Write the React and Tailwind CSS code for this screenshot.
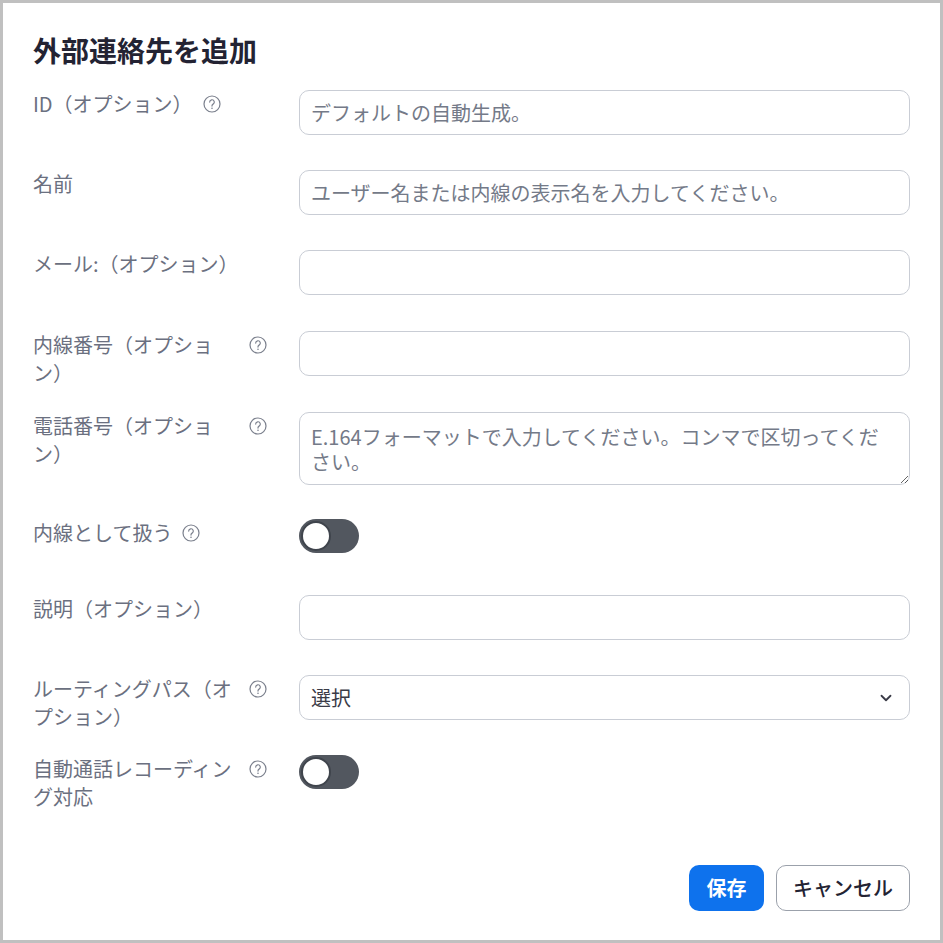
import { ChevronDown } from 'lucide-react';

const font = { fontFamily: '"Noto Sans CJK JP", "Noto Sans", sans-serif' };

function Help() {
  return (
    <svg width="18" height="18" viewBox="0 0 18 18" className="ml-[10px] mt-[5px] shrink-0">
      <circle cx="9" cy="9" r="8" fill="none" stroke="#7a7f8c" strokeWidth="1.2" />
      <path d="M6.7 7.1a2.3 2.3 0 1 1 3.4 2c-.7.4-1.1.8-1.1 1.6v.4" fill="none" stroke="#7a7f8c" strokeWidth="1.2" strokeLinecap="round" />
      <circle cx="9" cy="13.3" r="0.8" fill="#7a7f8c" />
    </svg>
  );
}

function Label({ text, help }) {
  return (
    <div className="flex w-[266px] shrink-0 items-start">
      <span className="max-w-[206px] text-[20px] leading-[28px] text-[#6b7080]">{text}</span>
      {help && <Help />}
    </div>
  );
}

// rows keep a fixed pitch, as in the original form; a two-line label does not push the next row
function Row({ label, help, children, className }) {
  return (
    <div className={`flex items-start ${className}`}>
      <Label text={label} help={help} />
      <div className="flex-1">{children}</div>
    </div>
  );
}

function Input({ placeholder }) {
  return (
    <input
      placeholder={placeholder}
      className="h-[45px] w-full rounded-[10px] border border-[#c9cdd5] bg-white px-[11px] text-[20px] text-[#232333] outline-none placeholder:text-[#747a88]"
    />
  );
}

function Toggle() {
  return (
    <div className="flex h-[34px] w-[60px] items-center rounded-full bg-[#52575f] px-[2px]">
      <span className="h-[30px] w-[30px] rounded-full border-2 border-[#3f444c] bg-white" />
    </div>
  );
}

export default function App() {
  return (
    <div style={font} className="h-[943px] w-[943px] border-[3px] border-[#c0c0c0] bg-white pl-[30px] pr-[30px] pt-[29px]">
      <h2 className="mb-[22px] text-[28px] font-bold leading-[36px] text-[#232333]">外部連絡先を追加</h2>
      <div className="flex flex-col">
        <Row label="ID（オプション）" help className="h-[80px]">
          <Input placeholder="デフォルトの自動生成。" />
        </Row>
        <Row label="名前" className="h-[80px]">
          <Input placeholder="ユーザー名または内線の表示名を入力してください。" />
        </Row>
        <Row label="メール:（オプション）" className="h-[81px]">
          <Input />
        </Row>
        <Row label="内線番号（オプション）" help className="h-[81px]">
          <Input />
        </Row>
        <Row label="電話番号（オプション）" help className="h-[107px]">
          <textarea
            placeholder="E.164フォーマットで入力してください。コンマで区切ってください。"
            className="block h-[73px] w-full rounded-[10px] border border-[#c9cdd5] bg-white px-[11px] pt-[11px] text-[20px] leading-[25px] text-[#232333] outline-none placeholder:text-[#747a88]"
          />
        </Row>
        <Row label="内線として扱う" help className="h-[76px]">
          <Toggle />
        </Row>
        <Row label="説明（オプション）" className="h-[80px]">
          <Input />
        </Row>
        <Row label="ルーティングパス（オプション）" help className="h-[80px]">
          <div className="flex h-[45px] w-full items-center justify-between rounded-[10px] border border-[#c9cdd5] bg-white pl-[11px] pr-[14px]">
            <span className="text-[20px] text-[#3a3b47]">選択</span>
            <ChevronDown size={18} strokeWidth={2.4} color="#3a3b47" />
          </div>
        </Row>
        <Row label="自動通話レコーディング対応" help className="h-[110px]">
          <Toggle />
        </Row>
      </div>
      <div className="flex justify-end gap-[12px]">
        <button className="h-[46px] w-[75px] rounded-[10px] bg-[#0e72ed] text-[20px] font-bold text-white">保存</button>
        <button className="h-[46px] w-[134px] rounded-[10px] border border-[#9ba1ab] bg-white text-[20px] font-medium text-[#232333]">キャンセル</button>
      </div>
    </div>
  );
}
